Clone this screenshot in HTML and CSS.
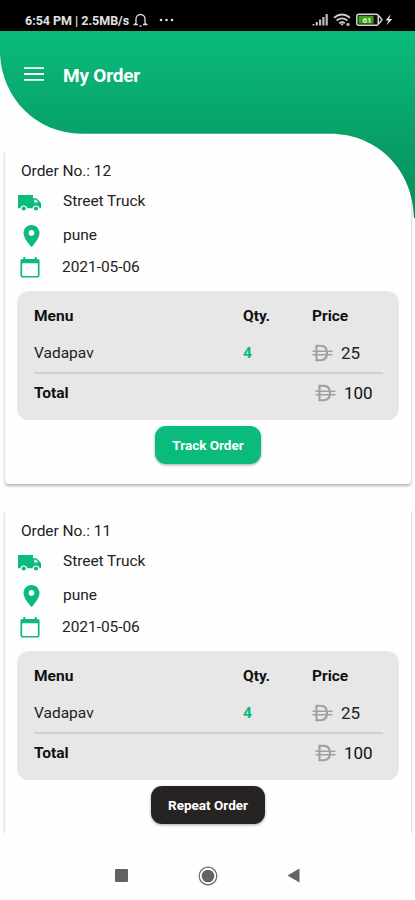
FILE: index.html
```html
<!DOCTYPE html>
<html lang="en">
<head>
<meta charset="utf-8">
<title>My Order</title>
<link rel="stylesheet" href="styles.css">
</head>
<body>
<svg class="defs" width="0" height="0">
  <symbol id="truck" viewBox="0 0 23 16"><path d="M0 0h15v3.300h3.500L23 8v5.200h-1.500a3.600 3.600 0 0 0-7 0H9.300a3.600 3.600 0 0 0-7 0H0zM16.300 4.800v2.700h4l-2.400-2.700z" fill-rule="evenodd"/><circle cx="5.800" cy="13.500" r="2.100"/><circle cx="18" cy="13.500" r="2.100"/></symbol>
  <symbol id="pin" viewBox="4 1 16 22"><path d="M12 1C7.600 1 4 4.600 4 9c0 6 8 14 8 14s8-8 8-14c0-4.400-3.600-8-8-8zm0 10.700a2.800 2.800 0 1 1 0-5.600 2.800 2.800 0 0 1 0 5.600z"/></symbol>
  <symbol id="calendar" viewBox="0 0 20 22"><path d="M3 0h2v2h10V0h2v2h1a2 2 0 0 1 2 2v15.500a2 2 0 0 1-2 2H2a2 2 0 0 1-2-2V4a2 2 0 0 1 2-2h1zM1.800 6.500v12.300a1 1 0 0 0 1 1h14.400a1 1 0 0 0 1-1V6.500z" fill-rule="evenodd"/></symbol>
  <symbol id="coin" viewBox="0 0 21 18"><path d="M4.500 1.800H8.500c4.500 0 6.500 2.700 6.500 7.200s-2 7.200-6.500 7.200h-4z" fill="none" stroke="#a0a0a0" stroke-width="2.100"/><path d="M.5 7.200h20M.5 10.800h20" stroke="#a0a0a0" stroke-width="1.400"/></symbol>
</svg>
<div class="screen">
  <div class="status">
    <span class="clock">6:54 PM | 2.5MB/s</span>
    <svg class="bell" width="15" height="14" viewBox="0 0 15 14"><path d="M3 10V6a4.500 4.500 0 0 1 9 0v4l1.500 1.500H10M5 11.500H1.500L3 10M6.500 13h2" fill="none" stroke="#ddd" stroke-width="1.300"/></svg>
    <svg class="dots" width="16" height="4" viewBox="0 0 16 4"><g fill="#ddd"><circle cx="2" cy="2" r="1.300"/><circle cx="7.500" cy="2" r="1.300"/><circle cx="13" cy="2" r="1.300"/></g></svg>
    <svg class="signals" width="84" height="14" viewBox="0 0 84 14">
      <path d="M.5 12.500V11h2v1.500zM3.700 12.500V9h2.200v3.500zM7 12.500V6.500h2.200v6zM10.300 12.500V4h2.200v8.500zM13.600 12.500V1h2.200v11.500z" fill="#bbb"/>
      <g fill="none" stroke="#ccc" stroke-width="1.800"><path d="M22 4.700q8-6.400 16 0M24.600 7.500q5.400-4.200 10.800 0M27.200 10.200q2.800-2 5.600 0"/></g>
      <path d="M28 10.500h4l-2 2.200z" fill="#ccc"/><circle cx="36" cy="11.500" r="1.800" fill="#aaa"/>
      <rect x="44.800" y="1.200" width="21.500" height="11" rx="2" fill="#111" stroke="#d5d5d5" stroke-width="1.500"/>
      <rect x="46.500" y="2.800" width="15" height="7.800" fill="#3f9e17"/><path d="M67 2.700l3 4-3 4" fill="none" stroke="#ccc" stroke-width="1.500"/>
      <text x="50.500" y="9.700" class="charge">61</text>
      <path d="M78.500 1.300L73.500 7.500h3l-2 4.800 6-6.300h-3.300z" fill="#ddd"/>
    </svg>
  </div>
  <header class="appbar">
    <svg class="backdrop" width="415" height="187" viewBox="0 0 415 187">
      <defs><linearGradient id="green" x1="0" y1="0" x2="0" y2="1"><stop offset="0" stop-color="#0abb7c"/><stop offset=".55" stop-color="#08a168"/><stop offset="1" stop-color="#058f59"/></linearGradient></defs>
      <path d="M0 0H415V187H414C413 138 377 102.700 330 102.700H82C36 102.700 2 67 0 23z" fill="url(#green)"/>
    </svg>
    <svg class="menu" width="20" height="14" viewBox="0 0 20 14"><path d="M0 1.200h20M0 7h20M0 12.800h20" stroke="#fff" stroke-width="1.800"/></svg>
    <h1>My Order</h1>
  </header>
  <main class="orders">
    <article class="card">
      <h2>Order No.: 12</h2>
      <div class="info truck"><svg><use href="#truck"/></svg><span>Street Truck</span></div>
      <div class="info pin"><svg><use href="#pin"/></svg><span>pune</span></div>
      <div class="info date"><svg><use href="#calendar"/></svg><span>2021-05-06</span></div>
      <section class="bill">
        <div class="row head"><span>Menu</span><span>Qty.</span><span>Price</span></div>
        <div class="row item"><span>Vadapav</span><b>4</b><span class="price"><svg><use href="#coin"/></svg>25</span></div>
        <div class="row total"><strong>Total</strong><span class="price"><svg><use href="#coin"/></svg>100</span></div>
      </section>
      <button class="track">Track Order</button>
    </article>
    <article class="card">
      <h2>Order No.: 11</h2>
      <div class="info truck"><svg><use href="#truck"/></svg><span>Street Truck</span></div>
      <div class="info pin"><svg><use href="#pin"/></svg><span>pune</span></div>
      <div class="info date"><svg><use href="#calendar"/></svg><span>2021-05-06</span></div>
      <section class="bill">
        <div class="row head"><span>Menu</span><span>Qty.</span><span>Price</span></div>
        <div class="row item"><span>Vadapav</span><b>4</b><span class="price"><svg><use href="#coin"/></svg>25</span></div>
        <div class="row total"><strong>Total</strong><span class="price"><svg><use href="#coin"/></svg>100</span></div>
      </section>
      <button class="repeat">Repeat Order</button>
    </article>
  </main>
  <nav class="navbar">
    <svg width="13" height="13"><rect width="13" height="13" rx="1" fill="#626262"/></svg>
    <svg width="20" height="20" viewBox="0 0 20 20"><circle cx="10" cy="10" r="8.800" fill="none" stroke="#666" stroke-width="1.200"/><circle cx="10" cy="10" r="6.300" fill="#626262"/></svg>
    <svg width="13" height="15" viewBox="0 0 13 15"><path d="M.5 7.500L12.500.5v14z" fill="#626262"/></svg>
  </nav>
</div>
</body>
</html>
```
FILE: styles.css
```css
* { box-sizing: border-box; }
body { margin: 0; background: #fefefe; font-family: Roboto, "Liberation Sans", sans-serif; color: #222; }
svg { display: block; flex: none; }
.defs { position: absolute; }
.screen { width: 415px; height: 900px; display: flex; flex-direction: column; overflow: hidden; }
.status { flex: none; height: 31px; background: #000; display: flex; align-items: center; padding: 9px 19px 0 25px; color: #e2e2e2; }
.clock { font-size: 12.5px; font-weight: 700; white-space: nowrap; width: 108px; letter-spacing: -.02px; }
.dots { margin-left: 11px; }
.signals { margin-left: auto; }
.charge { font: 700 8px Roboto, sans-serif; fill: #e8ffd8; }
.appbar { flex: none; height: 103px; position: relative; z-index: 1; display: flex; align-items: flex-start; padding: 36px 24px 0; }
.backdrop { position: absolute; left: 0; top: 0; z-index: -1; }
h1 { margin: -4px 0 0 19px; font-size: 19px; line-height: 26px; font-weight: 700; letter-spacing: -.2px; color: #fff; }
.orders { flex: none; height: 699px; overflow: hidden; padding: 15px 4px 0 5px; display: flex; flex-direction: column; gap: 25px; }
.card { flex: none; height: 335px; border-radius: 4px; background: #fefefe; box-shadow: 0 2px 3px rgba(0,0,0,.28), 0 0 2px rgba(0,0,0,.06); display: flex; flex-direction: column; padding: 7px 12px 0; }
h2 { margin: 0 0 0 4px; font-size: 15.5px; line-height: 30px; font-weight: 400; letter-spacing: -.05px; }
.info { display: flex; align-items: center; font-size: 15.5px; letter-spacing: -.05px; }
.info svg { fill: #0abb7c; }
.info.truck { height: 30px; }
.info.truck svg { width: 23px; height: 16px; margin: 3px 22px 0 1px; }
.info.pin { height: 38px; }
.info.pin svg { width: 17px; height: 22px; margin: 1px 23px 0 6px; }
.info.date { height: 25px; }
.info.date svg { width: 20px; height: 21px; margin: 2px 22px 0 3px; }
.bill { flex: none; height: 129px; margin: 12px 0 0; border-radius: 12px; background: #e7e7e7; padding: 6px 16px 0 17px; }
.row { display: grid; grid-template-columns: 209px 69px 1fr; align-items: center; font-size: 15.5px; }
.head { height: 37px; font-weight: 700; color: #111; }
.item { height: 40px; border-bottom: 2px solid #cfcfcf; padding-top: 0; }
.item b { color: #0abb7c; }
.total { height: 37px; grid-template-columns: 281px 1fr; color: #111; }
.price { display: flex; align-items: center; gap: 8px; font-size: 17px; letter-spacing: -.1px; }
.price svg { width: 21px; height: 18px; }
button { align-self: center; flex: none; height: 38px; margin: 6px 0 0 0; border: 0; border-radius: 11px; font: 700 13.5px Roboto, sans-serif; color: #fff; box-shadow: 0 1px 3px rgba(0,0,0,.35); padding: 0; }
.track { width: 106px; background: #0abb7c; }
.repeat { width: 114px; background: #272322; }
.navbar { flex: none; height: 50px; margin-top: 17px; border-top: 1px solid #f9f9f9; display: flex; align-items: center; justify-content: space-between; padding: 0 115px; background: #fefefe; }
```
